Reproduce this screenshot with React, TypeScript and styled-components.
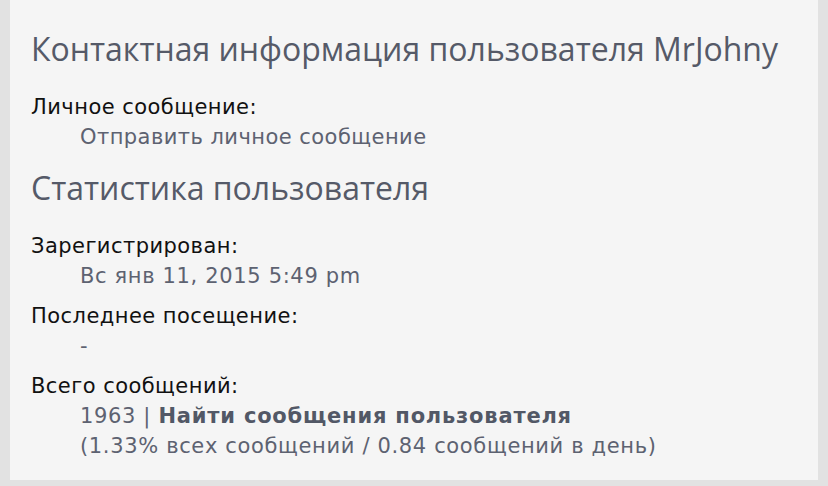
import React from "react";
import styled, { createGlobalStyle } from "styled-components";

const Global = createGlobalStyle`
  html, body { margin: 0; padding: 0; background: #e2e2e2; }
  body { font-family: "DejaVu Sans", Verdana, sans-serif; }
`;

const Panel = styled.div`
  margin: 0 10px;
  background: #f5f5f5;
  padding: 29px 21px 19px;
`;

const Heading = styled.h3`
  margin: 0;
  font-family: "Open Sans", "Noto Sans", sans-serif;
  font-weight: 400;
  font-size: 32px;
  line-height: 40px;
  color: #555a68;
  white-space: nowrap;
`;

const Section = styled.section`
  & + & { margin-top: 15.6px; }
`;

const List = styled.dl`
  margin: 23.4px 0 0;
  font-size: 21px;
  line-height: 30px;
  letter-spacing: 0.45px;
`;

const Group = styled.div`
  & + & { margin-top: 10px; }
`;

const Term = styled.dt`
  color: #111;
`;

const Value = styled.dd<{ $wide?: boolean }>`
  margin: 0 0 0 49px;
  color: #5d6271;
  white-space: nowrap;
  letter-spacing: ${(p) => (p.$wide ? "0.65px" : "0.45px")};
`;

const Strong = styled.b`
  color: #525866;
  font-weight: 700;
  letter-spacing: 0.8px;
`;

export default function App() {
  return (
    <>
      <Global />
      <Panel>
        <Section>
          <Heading>Контактная информация пользователя MrJohny</Heading>
          <List>
            <Group>
              <Term>Личное сообщение:</Term>
              <Value>Отправить личное сообщение</Value>
            </Group>
          </List>
        </Section>
        <Section>
          <Heading>Статистика пользователя</Heading>
          <List>
            <Group>
              <Term>Зарегистрирован:</Term>
              <Value $wide>Вс янв 11, 2015 5:49 pm</Value>
            </Group>
            <Group>
              <Term>Последнее посещение:</Term>
              <Value>-</Value>
            </Group>
            <Group>
              <Term>Всего сообщений:</Term>
              <Value $wide>
                1963 | <Strong>Найти сообщения пользователя</Strong>
              </Value>
              <Value $wide>(1.33% всех сообщений / 0.84 сообщений в день)</Value>
            </Group>
          </List>
        </Section>
      </Panel>
    </>
  );
}
